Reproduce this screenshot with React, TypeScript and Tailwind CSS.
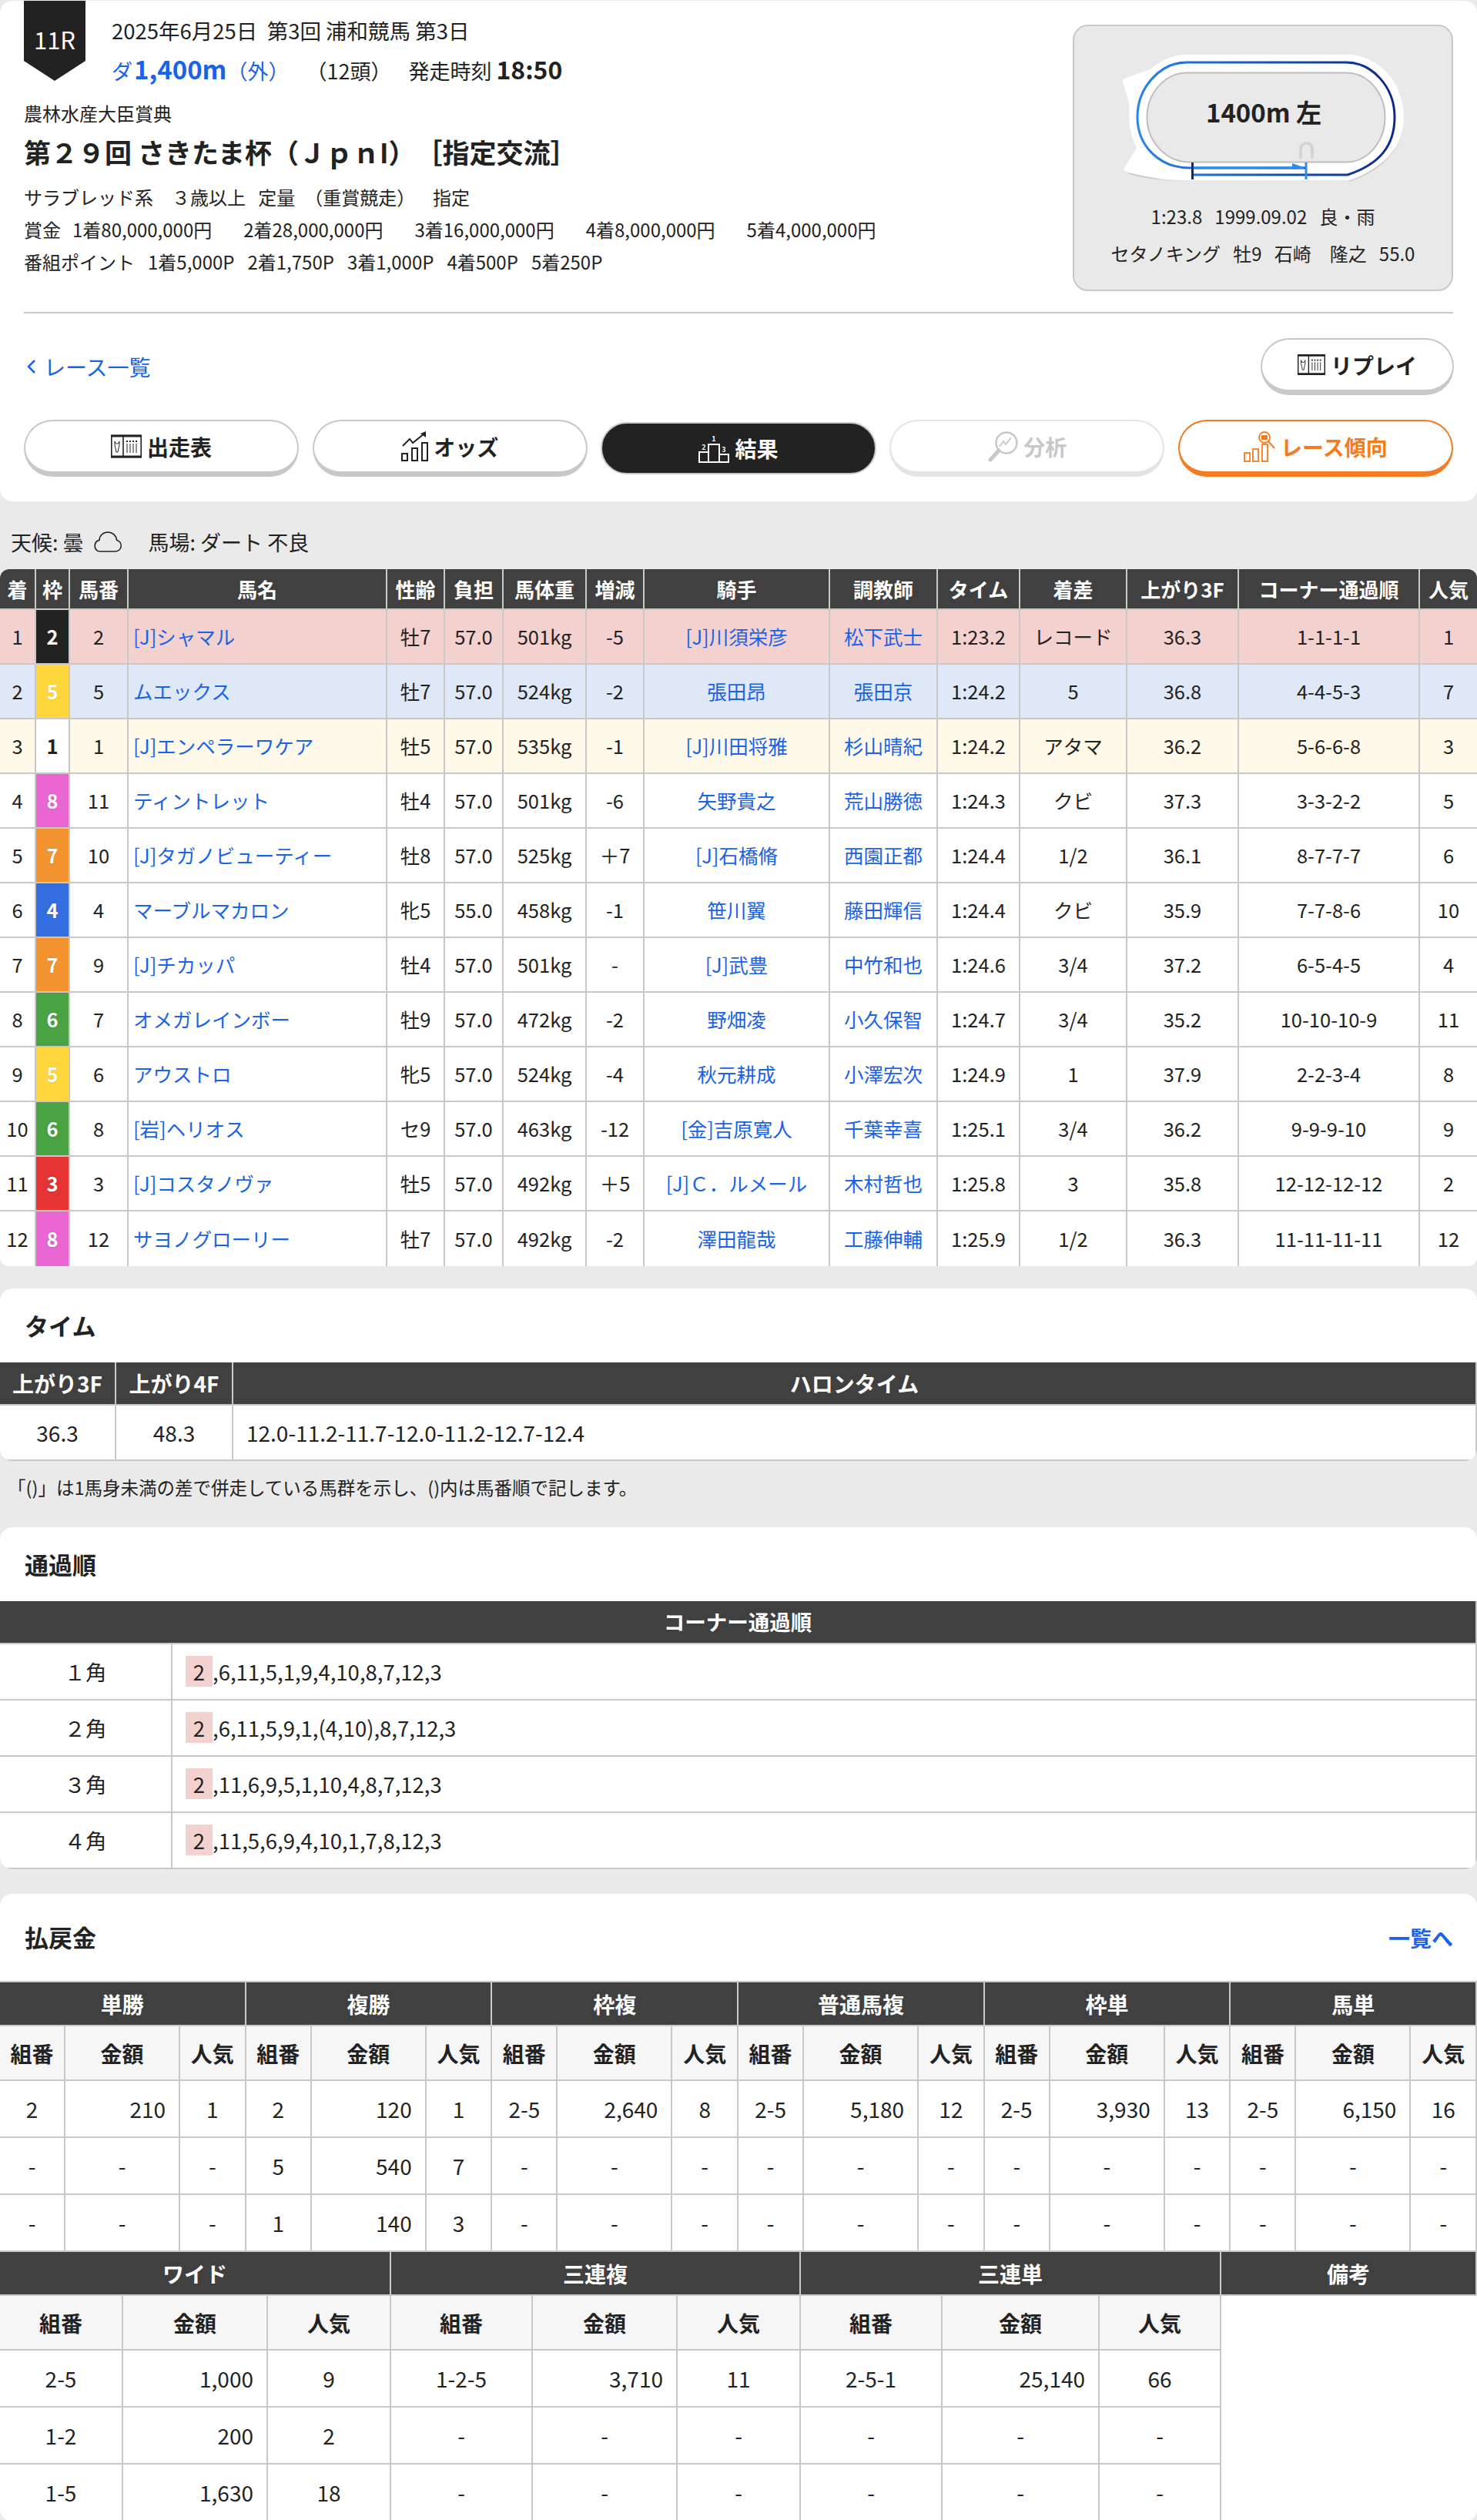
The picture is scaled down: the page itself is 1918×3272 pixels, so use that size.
import type { ReactNode } from 'react'

const FONT = "font-['Noto_Sans_CJK_JP','Noto_Sans',sans-serif]"
const cellBase = 'border-r-2 border-b-2 border-[#c8c8c8] p-0 text-center align-middle'

type Horse = [number, number, number, string, string, string, string, string, string, string, string, string, string, string, number]

const horses: Horse[] = [
    [1, 2, 2, '[J]シャマル', '牡7', '57.0', '501kg', '-5', '[J]川須栄彦', '松下武士', '1:23.2', 'レコード', '36.3', '1-1-1-1', 1],
    [2, 5, 5, 'ムエックス', '牡7', '57.0', '524kg', '-2', '張田昂', '張田京', '1:24.2', '5', '36.8', '4-4-5-3', 7],
    [3, 1, 1, '[J]エンペラーワケア', '牡5', '57.0', '535kg', '-1', '[J]川田将雅', '杉山晴紀', '1:24.2', 'アタマ', '36.2', '5-6-6-8', 3],
    [4, 8, 11, 'ティントレット', '牡4', '57.0', '501kg', '-6', '矢野貴之', '荒山勝徳', '1:24.3', 'クビ', '37.3', '3-3-2-2', 5],
    [5, 7, 10, '[J]タガノビューティー', '牡8', '57.0', '525kg', '＋7', '[J]石橋脩', '西園正都', '1:24.4', '1/2', '36.1', '8-7-7-7', 6],
    [6, 4, 4, 'マーブルマカロン', '牝5', '55.0', '458kg', '-1', '笹川翼', '藤田輝信', '1:24.4', 'クビ', '35.9', '7-7-8-6', 10],
    [7, 7, 9, '[J]チカッパ', '牡4', '57.0', '501kg', '-', '[J]武豊', '中竹和也', '1:24.6', '3/4', '37.2', '6-5-4-5', 4],
    [8, 6, 7, 'オメガレインボー', '牡9', '57.0', '472kg', '-2', '野畑凌', '小久保智', '1:24.7', '3/4', '35.2', '10-10-10-9', 11],
    [9, 5, 6, 'アウストロ', '牝5', '57.0', '524kg', '-4', '秋元耕成', '小澤宏次', '1:24.9', '1', '37.9', '2-2-3-4', 8],
    [10, 6, 8, '[岩]ヘリオス', 'セ9', '57.0', '463kg', '-12', '[金]吉原寛人', '千葉幸喜', '1:25.1', '3/4', '36.2', '9-9-9-10', 9],
    [11, 3, 3, '[J]コスタノヴァ', '牡5', '57.0', '492kg', '＋5', '[J]Ｃ．ルメール', '木村哲也', '1:25.8', '3', '35.8', '12-12-12-12', 2],
    [12, 8, 12, 'サヨノグローリー', '牡7', '57.0', '492kg', '-2', '澤田龍哉', '工藤伸輔', '1:25.9', '1/2', '36.3', '11-11-11-11', 12],
]

const frameColors: Record<number, string> = {
    1: 'bg-white text-[#222]',
    2: 'bg-[#222] text-white',
    3: 'bg-[#e63333] text-white [text-shadow:0_0_2px_rgba(0,0,0,0.2)]',
    4: 'bg-[#336ee0] text-white [text-shadow:0_0_2px_rgba(0,0,0,0.2)]',
    5: 'bg-[#ffd63b] text-white [text-shadow:0_0_2px_rgba(160,100,0,0.35)]',
    6: 'bg-[#4aa342] text-white [text-shadow:0_0_2px_rgba(0,0,0,0.2)]',
    7: 'bg-[#f39330] text-white [text-shadow:0_0_2px_rgba(0,0,0,0.2)]',
    8: 'bg-[#ea66d3] text-white [text-shadow:0_0_2px_rgba(0,0,0,0.2)]',
}

const rowColors: Record<number, string> = {
    1: 'bg-[#f3d1cf]',
    2: 'bg-[#dfe8f6]',
    3: 'bg-[#fef9e8]',
}

const resultHeads = ['着', '枠', '馬番', '馬名', '性齢', '負担', '馬体重', '増減', '騎手', '調教師', 'タイム', '着差', '上がり3F', 'コーナー通過順', '人気']
const resultCols = ['w-[47px]', 'w-[44px]', 'w-[76px]', 'w-[336px]', 'w-[75px]', 'w-[76px]', 'w-[108px]', 'w-[75px]', 'w-[241px]', 'w-[140px]', 'w-[107px]', 'w-[139px]', 'w-[145px]', 'w-[235px]', 'w-[74px]']

const payoutTop = [
    { name: '単勝', rows: [['2', '210', '1'], ['-', '-', '-'], ['-', '-', '-']] },
    { name: '複勝', rows: [['2', '120', '1'], ['5', '540', '7'], ['1', '140', '3']] },
    { name: '枠複', rows: [['2-5', '2,640', '8'], ['-', '-', '-'], ['-', '-', '-']] },
    { name: '普通馬複', rows: [['2-5', '5,180', '12'], ['-', '-', '-'], ['-', '-', '-']] },
    { name: '枠単', rows: [['2-5', '3,930', '13'], ['-', '-', '-'], ['-', '-', '-']] },
    { name: '馬単', rows: [['2-5', '6,150', '16'], ['-', '-', '-'], ['-', '-', '-']] },
]

const payoutBottom = [
    { name: 'ワイド', rows: [['2-5', '1,000', '9'], ['1-2', '200', '2'], ['1-5', '1,630', '18']] },
    { name: '三連複', rows: [['1-2-5', '3,710', '11'], ['-', '-', '-'], ['-', '-', '-']] },
    { name: '三連単', rows: [['2-5-1', '25,140', '66'], ['-', '-', '-'], ['-', '-', '-']] },
]

const corners = [
    ['１角', ',6,11,5,1,9,4,10,8,7,12,3'],
    ['２角', ',6,11,5,9,1,(4,10),8,7,12,3'],
    ['３角', ',11,6,9,5,1,10,4,8,7,12,3'],
    ['４角', ',11,5,6,9,4,10,1,7,8,12,3'],
]

function TableIcon({ className = '' }: { className?: string }) {
    return (
        <svg viewBox="0 0 40 31" className={className} fill="none" stroke="#222">
            <rect x="0.8" y="1.5" width="38.4" height="28" strokeWidth="1.6" />
            <path d="M0 2h40M0 29h40" strokeWidth="3" />
            <path d="M16 2v27" strokeWidth="1.6" />
            <path d="M5 9l1.500 3h3L11 9v5l-1 4-1 5H7l-1-5-1-4z" strokeWidth="1" />
            <path d="M21 8v2M25 8v2M29 8v2M33 8v2" strokeWidth="2" />
            <path d="M21 12v12M25 12v12M29 12v12M33 12v12" strokeWidth="1" />
        </svg>
    )
}

function OddsIcon() {
    return (
        <svg viewBox="0 0 35 39" className="h-[39px] w-[35px]" fill="none" stroke="#222" strokeWidth="2">
            <rect x="1" y="29" width="7" height="9" />
            <rect x="14" y="22" width="7" height="16" />
            <rect x="27" y="15" width="7" height="23" />
            <path d="M2 19l9-9 4 5L30 3" />
            <path d="M25 3l7-3v8z" fill="#222" stroke="none" />
        </svg>
    )
}

function PodiumIcon() {
    return (
        <svg viewBox="0 0 40 37" className="h-[37px] w-[40px] overflow-visible" fill="none" stroke="#fff" strokeWidth="2">
            <rect x="1" y="23" width="12" height="13" />
            <rect x="13" y="13" width="14" height="23" />
            <rect x="27" y="26" width="12" height="10" />
            <text x="20" y="9" textAnchor="middle" fontSize="9" fill="#fff" stroke="none">1</text>
            <text x="7" y="20" textAnchor="middle" fontSize="9" fill="#fff" stroke="none">2</text>
            <text x="33" y="23" textAnchor="middle" fontSize="9" fill="#fff" stroke="none">3</text>
        </svg>
    )
}

function AnalysisIcon() {
    return (
        <svg viewBox="0 0 40 40" className="h-[40px] w-[40px]" fill="none" stroke="#c8c8c8" strokeWidth="2.500">
            <circle cx="25" cy="15" r="13.500" />
            <path d="M15 25L4 37" strokeWidth="5" strokeLinecap="round" />
            <path d="M16 20l5-7 3 4 7-9" strokeWidth="1.800" />
        </svg>
    )
}

function TrendIcon() {
    return (
        <svg viewBox="0 0 41 40" className="h-[40px] w-[41px]" fill="none" stroke="#f47b20" strokeWidth="1.800">
            <rect x="1" y="28" width="7" height="11" />
            <rect x="12" y="23" width="7" height="16" />
            <rect x="24" y="17" width="7" height="22" />
            <circle cx="27" cy="8" r="7" />
            <rect x="23" y="5" width="8" height="6" fill="#f47b20" stroke="none" />
            <path d="M32 13l8 9" strokeWidth="2" />
        </svg>
    )
}

function TrackMap() {
    return (
        <svg viewBox="0 0 366 165" className="h-[165px] w-[366px]" fill="none">
            <defs>
                <linearGradient id="trackLine" x1="0" x2="1" y1="0" y2="0">
                    <stop offset="0" stopColor="#2a84ea" />
                    <stop offset="0.55" stopColor="#1450ae" />
                    <stop offset="1" stopColor="#0b2a8c" />
                </linearGradient>
            </defs>
            <path d="M291 165H88C55 165 30 158 6 153Q20 161 88 166H293C340 150 366 120 367 81C366 120 340 148 293 165Z" fill="#c4c4c4" />
            <path
                d="M84 0H291C335 0 366 38 366 81C366 120 340 147 293 163H88C55 163 30 158 6 152Q1 150 3 147L19 121C13 108 9 95 9.500 79L9 62L1 35Q0 32 3 31L37 19C50 8 65 0 84 0Z"
                fill="#fff"
            />
            <path d="M84 23.500H291C320 23.500 341.500 50 341.500 81C341.500 112 320 139.500 291 139.500H88C56 139.500 32.500 112 32.500 81C32.500 50 56 23.500 84 23.500Z" fill="#e9e9e9" stroke="#bdbdbd" strokeWidth="2" />
            <path
                d="M240 147H88C48 147 20 118 20 81C20 42 50 10 84 10H291C325 10 354 42 354 81C354 118 335 142 293 156H92"
                stroke="url(#trackLine)"
                strokeWidth="3"
            />
            <path d="M92 147H236" stroke="#2a8cf0" strokeWidth="3" />
            <path d="M221 141l17 6-17 2z" fill="#2a8cf0" />
            <path d="M91.500 140v22" stroke="#0b2a8c" strokeWidth="3" />
            <path d="M239 140v22" stroke="#2a8cf0" strokeWidth="3" />
            <path d="M232 135v-12c0-11 15-11 15 0v12" stroke="#d4d4d4" strokeWidth="4" />
        </svg>
    )
}

function PillButton({ children, tone = 'plain', className = '' }: { children: ReactNode; tone?: 'plain' | 'active' | 'off' | 'orange'; className?: string }) {
    const toneClass = {
        plain: 'h-[74px] border-2 border-b-[7px] border-[#c8c8c8] bg-white text-[#222]',
        active: 'h-[68px] self-center border-2 border-[#c8c8c8] bg-[#222] text-white',
        off: 'h-[74px] border-2 border-b-[7px] border-[#e4e4e4] bg-white text-[#c8c8c8]',
        orange: 'h-[74px] border-2 border-b-[7px] border-[#f47b20] bg-white text-[#f47b20]',
    }[tone]
    return (
        <div className={`flex items-center justify-center gap-[7px] rounded-[37px] text-[28px] font-bold ${toneClass} ${className}`}>
            {children}
        </div>
    )
}

function Card({ children, className = '' }: { children: ReactNode; className?: string }) {
    return <section className={`overflow-hidden rounded-[16px] bg-white ${className}`}>{children}</section>
}

function SectionTitle({ children, height }: { children: ReactNode; height: string }) {
    return <h2 className={`flex items-center px-[32px] text-[31px] font-bold ${height}`}>{children}</h2>
}

function HeadCell({ children, className = '', colSpan }: { children?: ReactNode; className?: string; colSpan?: number }) {
    return (
        <th colSpan={colSpan} className={`${cellBase} bg-[#404040] font-bold text-white ${className}`}>
            {children}
        </th>
    )
}

function PayoutTable({ groups, cols, note }: { groups: typeof payoutTop; cols: string[]; note?: boolean }) {
    return (
        <table className="w-full table-fixed border-separate border-spacing-0 text-[28px]">
            <colgroup>
                {cols.map((c, i) => (
                    <col key={i} className={c} />
                ))}
            </colgroup>
            <thead>
                <tr className="h-[57px]">
                    {groups.map((g) => (
                        <HeadCell key={g.name} colSpan={3}>{g.name}</HeadCell>
                    ))}
                    {note && <HeadCell>備考</HeadCell>}
                </tr>
                <tr className="h-[71px]">
                    {groups.map((g) =>
                        ['組番', '金額', '人気'].map((h) => (
                            <th key={g.name + h} className={`${cellBase} bg-[#f6f6f6] font-bold`}>{h}</th>
                        )),
                    )}
                </tr>
            </thead>
            <tbody>
                {[0, 1, 2].map((r) => (
                    <tr key={r} className="h-[74px]">
                        {groups.map((g) => {
                            const [combo, money, pop] = g.rows[r]
                            return [
                                <td key={g.name + 'c'} className={cellBase}>{combo}</td>,
                                <td key={g.name + 'm'} className={`${cellBase} ${money === '-' ? '' : 'pr-[17px] text-right'}`}>{money}</td>,
                                <td key={g.name + 'p'} className={cellBase}>{pop}</td>,
                            ]
                        })}
                    </tr>
                ))}
            </tbody>
        </table>
    )
}

export default function App() {
    return (
        <div className={`${FONT} min-h-[3272px] bg-[#eaeaea] pt-px text-[#222]`}>
            {/* race header */}
            <Card className="h-[650px] px-[31px]">
                <div className="flex h-[404px] items-start justify-between">
                    <div>
                        <div className="flex">
                            <div className="flex h-[104px] w-[80px] items-center justify-center bg-[#222] pb-[4px] text-[31px] text-white [clip-path:polygon(0_0,100%_0,100%_75%,50%_100%,0_75%)]">
                                11R
                            </div>
                            <div className="ml-[34px] pt-[13px]">
                                <p className="text-[27.500px] leading-[50px]">2025年6月25日&nbsp; 第3回 浦和競馬 第3日</p>
                                <p className="flex items-baseline text-[27px] leading-[50px]">
                                    <span className="text-[#1a62e8]">ダ</span>
                                    <span className="ml-[2px] text-[33px] font-bold text-[#1a62e8]">1,400m</span>
                                    <span className="text-[#1a62e8]">（外）</span>
                                    <span className="ml-[22px]">（12頭）</span>
                                    <span className="ml-[22px]">発走時刻</span>
                                    <span className="ml-[6px] text-[32px] font-bold">18:50</span>
                                </p>
                            </div>
                        </div>
                        <p className="mt-[10px] text-[24px] leading-[40px]">農林水産大臣賞典</p>
                        <h1 className="text-[35px] font-bold leading-[60px]">第２９回 さきたま杯（ＪｐｎI）　［指定交流］</h1>
                        <p className="mt-[8px] whitespace-pre text-[24px] leading-[42px]">サラブレッド系　３歳以上   定量　（重賞競走）　  指定</p>
                        <p className="flex gap-[41px] text-[24px] leading-[42px]">
                            <span className="-mr-[26px]">賞金</span>
                            <span>1着80,000,000円</span>
                            <span>2着28,000,000円</span>
                            <span>3着16,000,000円</span>
                            <span>4着8,000,000円</span>
                            <span>5着4,000,000円</span>
                        </p>
                        <p className="flex gap-[17px] text-[24px] leading-[42px]">
                            <span>番組ポイント</span>
                            <span>1着5,000P</span>
                            <span>2着1,750P</span>
                            <span>3着1,000P</span>
                            <span>4着500P</span>
                            <span>5着250P</span>
                        </p>
                    </div>
                    <div className="mt-[31px] flex h-[346px] w-[494px] flex-col items-center rounded-[20px] border-2 border-[#c8c8c8] bg-[#e9e9e9] pt-[37px] text-[24px]">
                        <div className="relative">
                            <TrackMap />
                            <span className="absolute left-[184px] top-[75px] -translate-x-1/2 -translate-y-1/2 whitespace-nowrap text-[33px] font-bold">1400m 左</span>
                        </div>
                        <p className="mt-[22px] whitespace-pre leading-[46px]">1:23.8   1999.09.02   良・雨</p>
                        <p className="whitespace-pre leading-[50px]">セタノキング   牡9   石崎　隆之   55.0</p>
                    </div>
                </div>
                <div className="h-[2px] bg-[#c8c8c8]" />
                <div className="mt-[32px] flex h-[74px] items-center justify-between">
                    <a className="flex items-center gap-[9px] text-[28px] text-[#1a62e8]">
                        <svg viewBox="0 0 14 20" className="ml-[3px] h-[20px] w-[14px]" fill="none" stroke="#1a62e8" strokeWidth="2.500">
                            <path d="M11 2L3 10l8 8" />
                        </svg>
                        レース一覧
                    </a>
                    <PillButton className="mr-[-1px] w-[251px]">
                        <TableIcon className="h-[29px] w-[36px]" />
                        リプレイ
                    </PillButton>
                </div>
                <div className="mt-[32px] grid grid-cols-5 gap-[17.500px]">
                    <PillButton><TableIcon className="h-[31px] w-[40px]" />出走表</PillButton>
                    <PillButton><OddsIcon />オッズ</PillButton>
                    <PillButton tone="active"><PodiumIcon />結果</PillButton>
                    <PillButton tone="off"><AnalysisIcon />分析</PillButton>
                    <PillButton tone="orange"><TrendIcon />レース傾向</PillButton>
                </div>
            </Card>

            <div className="flex h-[88px] items-end pb-[15px] pl-[14px] text-[27px] leading-[40px]">
                天候: 曇
                <svg viewBox="0 0 40 27" className="mb-[7px] ml-[10px] h-[27px] w-[40px]" fill="none" stroke="#222" strokeWidth="1.600">
                    <path d="M10 26h21a7.500 7.500 0 0 0 1.500-14.800C32 5.500 27 1 21 1S10 5.500 10 11.400A7.500 7.500 0 0 0 10 26z" />
                </svg>
                <span className="ml-[34px]">馬場: ダート 不良</span>
            </div>

            {/* results */}
            <div className="overflow-hidden rounded-[12px] bg-white">
                <table className="w-full table-fixed border-separate border-spacing-0 text-[25.500px]">
                    <colgroup>
                        {resultCols.map((c, i) => (
                            <col key={i} className={c} />
                        ))}
                    </colgroup>
                    <thead>
                        <tr className="h-[53px]">
                            {resultHeads.map((h) => (
                                <HeadCell key={h} className="text-[26px] last:border-r-0">{h}</HeadCell>
                            ))}
                        </tr>
                    </thead>
                    <tbody className="[&>tr:last-child>td]:border-b-0 [&>tr>td:last-child]:border-r-0">
                        {horses.map((h) => (
                            <tr key={h[0]} className={`h-[71px] ${rowColors[h[0]] ?? 'bg-white'}`}>
                                <td className={cellBase}>{h[0]}</td>
                                <td className={`${cellBase} font-bold ${frameColors[h[1]]}`}>{h[1]}</td>
                                <td className={cellBase}>{h[2]}</td>
                                <td className={`${cellBase} pl-[6px] !text-left text-[#1a62e8]`}>{h[3]}</td>
                                <td className={cellBase}>{h[4]}</td>
                                <td className={cellBase}>{h[5]}</td>
                                <td className={cellBase}>{h[6]}</td>
                                <td className={cellBase}>{h[7]}</td>
                                <td className={`${cellBase} text-[#1a62e8]`}>{h[8]}</td>
                                <td className={`${cellBase} text-[#1a62e8]`}>{h[9]}</td>
                                <td className={cellBase}>{h[10]}</td>
                                <td className={cellBase}>{h[11]}</td>
                                <td className={cellBase}>{h[12]}</td>
                                <td className={cellBase}>{h[13]}</td>
                                <td className={cellBase}>{h[14]}</td>
                            </tr>
                        ))}
                    </tbody>
                </table>
            </div>

            {/* time */}
            <Card className="mt-[29px]">
                <SectionTitle height="h-[96px]">タイム</SectionTitle>
                <table className="w-full table-fixed border-separate border-spacing-0 text-[28px]">
                    <colgroup>
                        <col className="w-[151px]" />
                        <col className="w-[152px]" />
                        <col />
                    </colgroup>
                    <thead>
                        <tr className="h-[56px]">
                            <HeadCell>上がり3F</HeadCell>
                            <HeadCell>上がり4F</HeadCell>
                            <HeadCell>ハロンタイム</HeadCell>
                        </tr>
                    </thead>
                    <tbody>
                        <tr className="h-[72px]">
                            <td className={`${cellBase} border-b-0`}>36.3</td>
                            <td className={`${cellBase} border-b-0`}>48.3</td>
                            <td className={`${cellBase} border-b-0 pl-[17px] !text-left`}>12.0-11.2-11.7-12.0-11.2-12.7-12.4</td>
                        </tr>
                    </tbody>
                </table>
            </Card>
            <p className="flex h-[86px] items-center pb-[16px] pl-[10px] text-[23.500px]">「()」は1馬身未満の差で併走している馬群を示し、()内は馬番順で記します。</p>

            {/* corners */}
            <Card>
                <SectionTitle height="h-[96px]">通過順</SectionTitle>
                <table className="w-full table-fixed border-separate border-spacing-0 text-[27.500px]">
                    <colgroup>
                        <col className="w-[224px]" />
                        <col />
                    </colgroup>
                    <thead>
                        <tr className="h-[56px]">
                            <HeadCell colSpan={2}>コーナー通過順</HeadCell>
                        </tr>
                    </thead>
                    <tbody>
                        {corners.map(([name, order], i) => (
                            <tr key={name} className="h-[73px]">
                                <td className={`${cellBase} ${i === 3 ? 'border-b-0' : ''}`}>{name}</td>
                                <td className={`${cellBase} pl-[17px] !text-left ${i === 3 ? 'border-b-0' : ''}`}>
                                    <span className="inline-block h-[40px] w-[35px] bg-[#f3d1cf] text-center leading-[40px]">2</span>
                                    {order}
                                </td>
                            </tr>
                        ))}
                    </tbody>
                </table>
            </Card>

            {/* payouts */}
            <Card className="mt-[32px]">
                <div className="flex h-[113px] items-center justify-between pr-[31px]">
                    <SectionTitle height="h-[96px]">払戻金</SectionTitle>
                    <a className="text-[28px] font-bold text-[#1a62e8]">一覧へ</a>
                </div>
                <div className="border-t-2 border-[#c8c8c8]">
                    <PayoutTable groups={payoutTop} cols={Array(6).fill(['w-[85px]', 'w-[149px]', 'w-[85.670px]']).flat()} />
                    <PayoutTable
                        groups={payoutBottom}
                        cols={['w-[160px]', 'w-[188px]', 'w-[160px]', 'w-[184px]', 'w-[188px]', 'w-[160px]', 'w-[184px]', 'w-[204px]', 'w-[158px]', 'w-[332px]']}
                        note
                    />
                </div>
            </Card>
        </div>
    )
}
